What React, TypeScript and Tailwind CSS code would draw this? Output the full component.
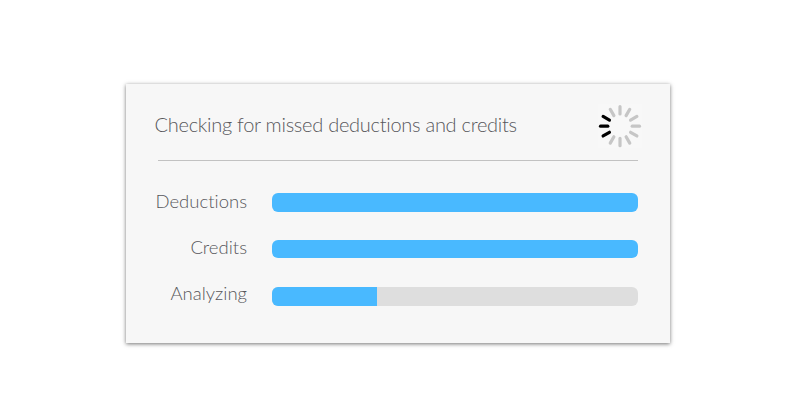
import React from 'react';

const ROWS = [
    { label: 'Deductions', progress: 100, spacing: 'mt-0', labelShift: '-mt-[3px]' },
    { label: 'Credits', progress: 100, spacing: 'mt-[28px]', labelShift: '-mt-[4px]' },
    { label: 'Analyzing', progress: 28.7, spacing: 'mt-[29px]', labelShift: '-mt-[6px]' }
];

const SPOKES = [0, 30, 60, 90, 120, 150, 180, 210, 240, 270, 300, 330];
const ACTIVE = [240, 270, 300];

const Spinner: React.FC = () => (
    <svg className="w-[44px] h-[44px] bg-[#f8f8f8]" viewBox="-22 -22.2 44 44">
        {SPOKES.map((angle) => (
            <line
                key={angle}
                x1="0"
                y1="-12.2"
                x2="0"
                y2="-19.5"
                stroke={ACTIVE.includes(angle) ? '#000000' : '#c6c6c6'}
                strokeWidth="3.2"
                strokeLinecap="round"
                transform={`rotate(${angle})`}
            />
        ))}
    </svg>
);

const ProgressBar: React.FC<{ progress: number }> = ({ progress }) => (
    <div className="w-[366px] h-[18.5px] rounded-[6px] bg-[#dedede] overflow-hidden">
        <div className="h-full bg-[#49b9ff]" style={{ width: `${progress}%` }} />
    </div>
);

export default function App() {
    return (
        <div className="w-[796px] h-[416px] bg-white pt-[84px] pl-[126px] overflow-hidden font-['Lato',sans-serif] font-light [font-variant-ligatures:none] text-[#58585c]">
            <div className="w-[544px] h-[259px] bg-[#f7f7f7] shadow-[0_1px_4px_rgba(0,0,0,0.55)]">
                {/* Header */}
                <div className="flex items-center justify-between h-[76px] pl-[28.5px] pr-[28px] pt-[8px]">
                    <h1 className="-mt-[4px] text-[20px] leading-[24px] tracking-[-0.27px] whitespace-nowrap">Checking for missed deductions and credits</h1>
                    <Spinner />
                </div>
                <div className="ml-[32px] mr-[32px] h-px bg-[#c2c2c2]" />

                {/* Progress rows */}
                <div className="flex flex-col pt-[32px]">
                    {ROWS.map((row) => (
                        <div key={row.label} className={`flex items-center h-[18.5px] ${row.spacing}`}>
                            <span className={`w-[121px] mr-[25px] text-right text-[18.5px] leading-[22px] ${row.labelShift}`}>{row.label}</span>
                            <ProgressBar progress={row.progress} />
                        </div>
                    ))}
                </div>
            </div>
        </div>
    );
}
